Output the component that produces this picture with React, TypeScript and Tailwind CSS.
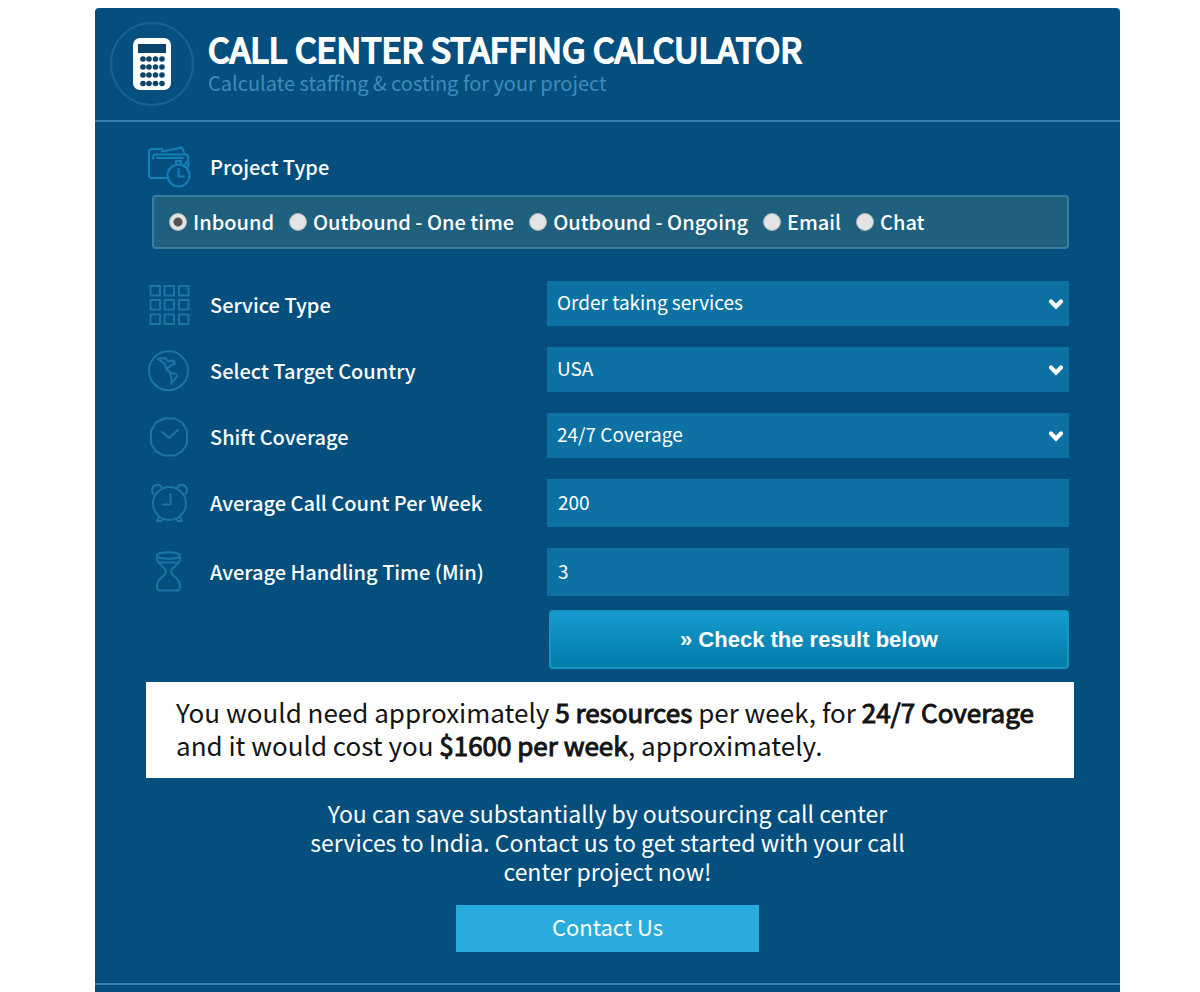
import { useState } from 'react';
import type { ReactNode } from 'react';

const projectTypes = ['Inbound', 'Outbound - One time', 'Outbound - Ongoing', 'Email', 'Chat'];

function CalculatorIcon() {
  return (
    <svg width="38" height="52" viewBox="0 0 38 52" aria-hidden="true">
      <rect width="38" height="52" rx="7" fill="#fff" />
      <rect x="5" y="6" width="28" height="9" fill="#0b4469" />
      {[21, 29, 37, 45.5].map((y) =>
        [10, 16, 22.5, 29].map((x) => <circle key={`${x}-${y}`} cx={x} cy={y} r="2.800" fill="#0b4469" />)
      )}
    </svg>
  );
}

function LineIcon({ children, color = '#1b75a5' }: { children: ReactNode; color?: string }) {
  return (
    <svg
      width="44"
      height="42"
      viewBox="0 1 44 42"
      fill="none"
      stroke={color}
      strokeWidth="2"
      strokeLinecap="round"
      strokeLinejoin="round"
      className="shrink-0"
      aria-hidden="true"
    >
      {children}
    </svg>
  );
}

function WalletIcon() {
  return (
    <LineIcon color="#1380b8">
      <path d="M19 33H5a3 3 0 0 1-3-3V7a3 3 0 0 1 3-3h10" />
      <path d="M6 13.500v-1a3 3 0 0 1 3-3h30a2 2 0 0 1 2 2v5" />
      <path d="M15 6.500 35 2.500l2 5" />
      <path d="M10 13h26" />
      <circle cx="31.500" cy="30.500" r="11" />
      <path d="M31.500 24v7.500h5.500" />
      <path d="M29 19v-3h5v3M38 20l1.500-3 2.500 2-1.500 3" />
    </LineIcon>
  );
}

function GridIcon() {
  return (
    <LineIcon>
      {[3, 17, 31.5].map((y) =>
        [3.5, 17.5, 32].map((x) => <rect key={`${x}-${y}`} x={x} y={y} width="9.500" height="9.500" />)
      )}
    </LineIcon>
  );
}

function GlobeIcon() {
  return (
    <LineIcon>
      <circle cx="21.500" cy="21.700" r="19.500" />
      <path d="M10.500 10c3-1 6-1 8.500-.5l1.500 3c2-1 4 0 6-1l1.500 3c-2 1-4 1-5 3l-2 1c-1 0-1.500 1-1 2.500l2 1 2 2c2 0 5 .5 6 2.500-.5 3-2.500 3.500-3.500 5.500l-2 3c-1-3 1-4.500-.5-7.500-1.500-2-1-3-.5-4.500-3-1-5-4-5.500-7.500-1-2-3.500-3-7.500-5.500Z" />
    </LineIcon>
  );
}

function ClockIcon() {
  return (
    <LineIcon>
      <path d="M17 3.500h11l7 4 5 8v13l-5 8-7 4H17l-8-4-5-8v-13l5-8Z" />
      <path d="m15 17 7 6 9-8" />
    </LineIcon>
  );
}

function AlarmIcon() {
  return (
    <LineIcon>
      <circle cx="22.500" cy="22.500" r="16.500" />
      <path d="M6.500 13C3.500 10 5 5 9.500 4c2.500-.5 4 0 5 2.500M38.500 13c3-3 1.500-8-3-9-2.500-.5-4 0-5 2.500" />
      <path d="M12 36l-2 4h4l3-2.500M33 36l2 4h-4l-3-2.500" />
      <path d="M23.500 13v10.500h-7.500" />
    </LineIcon>
  );
}

function HourglassIcon() {
  return (
    <LineIcon>
      <ellipse cx="21.500" cy="5.500" rx="11.500" ry="3.300" />
      <path d="M10 6v3c0 6 9 8 9 12.500S10 28 10 36c0 4 1 4.500 3 4.500h17c2.500 0 3-1 3-4.500 0-8-9-10-9-14.500S33 15 33 9V6" />
      <path d="M12.500 12.500h18" />
    </LineIcon>
  );
}

function SelectRow({ id, label, icon, options }: { id: string; label: string; icon: ReactNode; options: string[] }) {
  return (
    <div className="flex items-center">
      <label htmlFor={id} className="flex w-[400px] shrink-0 items-center gap-[19px] pt-[3px] leading-6 font-medium">
        {icon}
        {label}
      </label>
      <div className="relative flex-1">
        <select
          id={id}
          className="block h-[45px] w-full appearance-none rounded-none bg-[#0d72a3] pr-10 pb-[3px] pl-2.5 text-[19px] text-white"
        >
          {options.map((option) => (
            <option key={option}>{option}</option>
          ))}
        </select>
        <svg
          width="16"
          height="12"
          viewBox="0 0 16 12"
          className="pointer-events-none absolute top-[17px] right-[5px]"
          aria-hidden="true"
        >
          <path d="m3 3.500 5 5 5-5" fill="none" stroke="#fff" strokeWidth="4.200" strokeLinecap="round" />
        </svg>
      </div>
    </div>
  );
}

function InputRow({ id, label, icon, value }: { id: string; label: string; icon: ReactNode; value: string }) {
  return (
    <div className="flex items-center">
      <label htmlFor={id} className="flex w-[400px] shrink-0 items-center gap-[19px] leading-6 font-medium">
        {icon}
        {label}
      </label>
      <input
        id={id}
        type="text"
        defaultValue={value}
        className="h-12 min-w-0 flex-1 bg-[#0d72a3] px-[11px] pb-[3px] text-[19px] text-white"
      />
    </div>
  );
}

export default function App() {
  const [projectType, setProjectType] = useState('Inbound');

  return (
    <div className="flex min-h-screen flex-col bg-white pt-2 pr-20 pl-[95px] font-['Noto_Sans_CJK_SC',sans-serif] text-[20px] text-white">
      <main className="flex flex-1 flex-col rounded-t-[4px] bg-[#044f7e]">
        <header className="flex items-center gap-[14px] border-b-2 border-[#3580ad] px-[15px] py-[14px]">
          <div className="flex size-[84px] shrink-0 items-center justify-center rounded-full border-2 border-[#176390]">
            <CalculatorIcon />
          </div>
          <div className="pb-0.5">
            <h1 className="text-[34px] leading-10 font-normal [-webkit-text-stroke:2px_white]">
              CALL CENTER STAFFING CALCULATOR
            </h1>
            <p className="leading-7 text-[#3f8bbb]">Calculate staffing &amp; costing for your project</p>
          </div>
        </header>

        <form className="pt-6 pr-[51px] pl-[52px]" onSubmit={(e) => e.preventDefault()}>
          <fieldset>
            <legend className="flex items-center gap-[19px] leading-6 font-medium">
              <WalletIcon />
              Project Type
            </legend>
            <div className="mt-[7px] ml-[5px] flex h-[54px] items-center gap-[15px] rounded-[4px] border-2 border-[#3b7c9f] bg-[#20607f] px-[15px]">
              {projectTypes.map((type) => (
                <label key={type} className="flex items-center gap-[6px] leading-6 font-medium">
                  <input
                    type="radio"
                    name="project-type"
                    checked={projectType === type}
                    onChange={() => setProjectType(type)}
                    className="size-[18px] appearance-none rounded-full border border-[#a9b4ba] bg-[#e4e4e4] checked:bg-[radial-gradient(circle,#555_0_4px,#e4e4e4_5px)]"
                  />
                  {type}
                </label>
              ))}
            </div>
          </fieldset>

          <div className="mt-8 flex flex-col gap-[21px]">
            <SelectRow
              id="service"
              label="Service Type"
              icon={<GridIcon />}
              options={['Order taking services']}
            />
            <SelectRow id="country" label="Select Target Country" icon={<GlobeIcon />} options={['USA']} />
            <SelectRow id="shift" label="Shift Coverage" icon={<ClockIcon />} options={['24/7 Coverage']} />
            <InputRow id="calls" label="Average Call Count Per Week" icon={<AlarmIcon />} value="200" />
            <InputRow id="handling" label="Average Handling Time (Min)" icon={<HourglassIcon />} value="3" />
          </div>

          <div className="mt-[14px] pl-[402px]">
            <button
              type="submit"
              className="h-[59px] w-full rounded-[4px] border-2 border-[#1595c4] bg-linear-to-b from-[#159bce] to-[#027ba9] font-['Liberation_Sans',sans-serif] text-[22px] font-bold"
            >
              » Check the result below
            </button>
          </div>
        </form>

        <section className="mt-[13px] mr-[46px] ml-[51px] bg-white px-[30px] pt-[13px] pb-[17px] text-[26px] leading-[33px] text-[#141414]">
          <p>
            You would need approximately{' '}
            <b className="font-normal [-webkit-text-stroke:1px_#141414]">5 resources</b> per week, for{' '}
            <b className="font-normal [-webkit-text-stroke:1px_#141414]">24/7 Coverage</b> and it would cost you{' '}
            <b className="font-normal [-webkit-text-stroke:1px_#141414]">$1600 per week</b>, approximately.
          </p>
        </section>

        <section className="mt-[21px] flex flex-col items-center pb-[31px]">
          <p className="max-w-[610px] text-center text-[23px] leading-[29px]">
            You can save substantially by outsourcing call center services to India. Contact us to get started with your
            call center project now!
          </p>
          <a
            href="#contact"
            className="mt-[19px] flex h-[47px] w-[303px] items-center justify-center bg-[#29abde] pb-1 text-[22px]"
          >
            Contact Us
          </a>
        </section>
        <div className="border-t-2 border-[#3580ad]" />
      </main>
    </div>
  );
}
